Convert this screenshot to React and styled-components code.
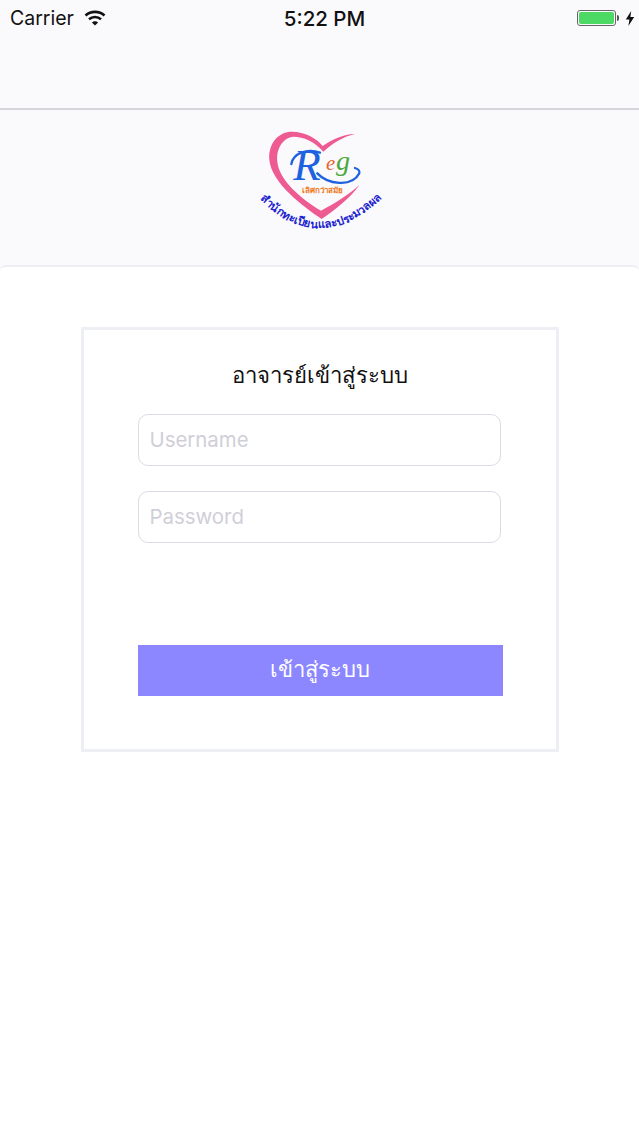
import React from "react";
import styled, { createGlobalStyle } from "styled-components";

const GlobalStyle = createGlobalStyle`
    html, body {
        margin: 0;
        padding: 0;
        background: #faf9fc;
    }
    * {
        box-sizing: border-box;
    }
`;

const Page = styled.div`
    width: 639px;
    height: 1136px;
    display: flex;
    flex-direction: column;
    overflow: hidden;
    background: #faf9fc;
    font-family: Inter, "Noto Sans", sans-serif;
`;

const TopBar = styled.header`
    height: 110px;
    flex-shrink: 0;
    border-bottom: 2px solid #d6d5d9;
`;

const StatusBar = styled.div`
    height: 36px;
    display: grid;
    grid-template-columns: 1fr auto 1fr;
    align-items: center;
    padding: 0 4px 0 10px;
    color: #111;
`;

const StatusLeft = styled.div`
    display: flex;
    align-items: center;
    gap: 10px;
    font-size: 19.5px;
`;

const StatusTime = styled.div`
    padding-left: 4px;
    font-size: 20.5px;
    font-weight: 500;
`;

const StatusRight = styled.div`
    display: flex;
    align-items: center;
    justify-content: flex-end;
    gap: 9px;
`;

const Battery = styled.div`
    width: 39px;
    height: 16px;
    padding: 1px;
    border: 1px solid #666;
    border-radius: 3px;
    position: relative;
    &::after {
        content: "";
        position: absolute;
        right: -4px;
        top: 4px;
        width: 2px;
        height: 6px;
        border-radius: 0 2px 2px 0;
        background: #555;
    }
`;

const BatteryFill = styled.div`
    height: 100%;
    border-radius: 2px;
    background: #4cd964;
`;

const LogoBand = styled.div`
    height: 155px;
    flex-shrink: 0;
    display: flex;
    justify-content: center;
    padding-top: 10px;
`;

const Sheet = styled.main`
    flex: 1;
    padding-top: 60px;
    display: flex;
    justify-content: center;
    align-items: flex-start;
    background: #fff;
    border-top: 2px solid #eeedf1;
    border-radius: 6px 6px 0 0;
`;

const Card = styled.section`
    width: 478px;
    height: 425px;
    padding: 28px 54px 0;
    border: 3px solid #eeeef5;
    display: flex;
    flex-direction: column;
    background: #fff;
`;

const Title = styled.h1`
    margin: 0 0 22px;
    height: 34px;
    line-height: 34px;
    text-align: center;
    font-size: 22.2px;
    font-weight: 500;
    color: #111;
`;

const Field = styled.input`
    width: 363px;
    height: 52px;
    margin-bottom: 25px;
    padding: 0 11px 2px;
    border: 1px solid #dcdbe3;
    border-radius: 10px;
    background: #fff;
    font-family: inherit;
    font-size: 20.4px;
    outline: none;
    &::placeholder {
        color: #d0cfd8;
        opacity: 1;
    }
`;

const SubmitButton = styled.button`
    width: 365px;
    height: 51px;
    margin-top: 77px;
    border: 0;
    background: #8c87ff;
    color: #fff;
    font-family: inherit;
    font-size: 22px;
    padding: 0 0 2px;
`;

const LogoLetter = styled.text`
    font-family: "Liberation Serif", serif;
    font-style: italic;
`;

const LogoCaption = styled.text`
    font-family: "Noto Sans", sans-serif;
    font-weight: 700;
`;

const WifiIcon = () => (
    <svg width="22" height="16" viewBox="0 0 22 16" fill="none" stroke="#111" strokeWidth="2.6">
        <path d="M1.5 5.5C6.8 0.6 15.2 0.6 20.5 5.5" />
        <path d="M5 9.2C8.4 6.2 13.6 6.2 17 9.2" />
        <path d="M11 15.5L7.9 12.4C9.6 10.9 12.4 10.9 14.1 12.4Z" fill="#111" stroke="none" />
    </svg>
);

const BoltIcon = () => (
    <svg width="10" height="15" viewBox="0 0 10 15">
        <path d="M6.2 0L0.8 8.4H4.4L3.4 15L9.2 6H5.4Z" fill="#111" />
    </svg>
);

const Logo = () => (
    <svg width="160" height="110" viewBox="0 0 480 330">
        <defs>
            <path id="logoArc" d="M62 240Q240 412 424 236" />
        </defs>
        <path
            d="M245 297C190 260 95 190 88 120C84 65 120 35 155 35C195 35 230 55 248 78C275 60 310 42 345 42C310 50 280 68 250 95C225 65 190 50 160 50C130 52 108 85 112 125C118 185 190 240 243 272C285 250 325 225 358 195C330 235 285 270 245 297Z"
            fill="#ee5a92"
        />
        <LogoLetter x="160" y="180" fontSize="135" fill="#1e62e0">R</LogoLetter>
        <path
            d="M154 132C160 100 200 85 240 98"
            fill="none"
            stroke="#1e62e0"
            strokeWidth="7"
            strokeLinecap="round"
        />
        <path
            d="M232 160C262 192 335 204 358 160C360 152 352 146 345 144"
            fill="none"
            stroke="#1e62e0"
            strokeWidth="7"
            strokeLinecap="round"
        />
        <LogoLetter x="258" y="150" fontSize="62" fill="#e8642c">e</LogoLetter>
        <LogoLetter x="288" y="150" fontSize="84" fill="#4aa83c">g</LogoLetter>
        <LogoCaption x="247" y="220" fontSize="24" textAnchor="middle" fill="#ee7a1c">
            เลิศกว่าสมัย
        </LogoCaption>
        <LogoCaption fontSize="34" fill="#1c1fd0">
            <textPath href="#logoArc" startOffset="50%" textAnchor="middle">
                สำนักทะเบียนและประมวลผล
            </textPath>
        </LogoCaption>
    </svg>
);

export default function App() {
    return (
        <Page>
            <GlobalStyle />
            <TopBar>
                <StatusBar>
                    <StatusLeft>
                        Carrier
                        <WifiIcon />
                    </StatusLeft>
                    <StatusTime>5:22 PM</StatusTime>
                    <StatusRight>
                        <Battery>
                            <BatteryFill />
                        </Battery>
                        <BoltIcon />
                    </StatusRight>
                </StatusBar>
            </TopBar>
            <LogoBand>
                <Logo />
            </LogoBand>
            <Sheet>
                <Card>
                    <Title>อาจารย์เข้าสู่ระบบ</Title>
                    <Field placeholder="Username" readOnly />
                    <Field placeholder="Password" readOnly />
                    <SubmitButton>เข้าสู่ระบบ</SubmitButton>
                </Card>
            </Sheet>
        </Page>
    );
}
